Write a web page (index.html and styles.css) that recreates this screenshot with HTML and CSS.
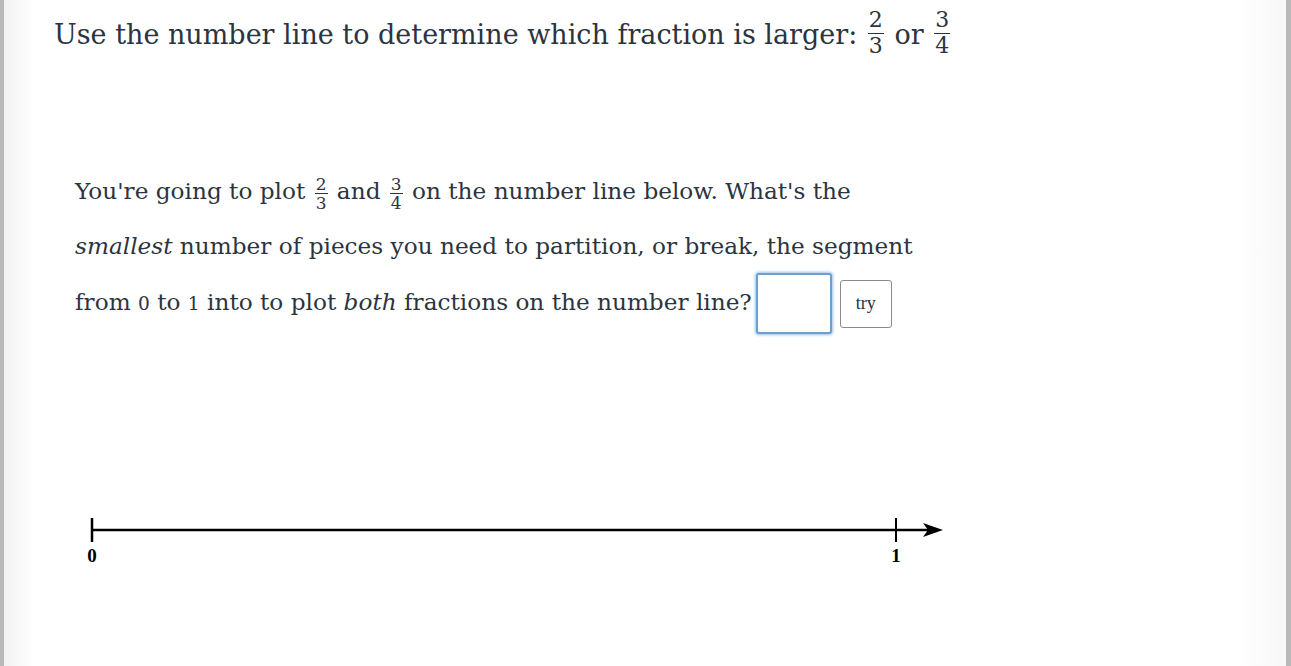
FILE: index.html
```html
<!DOCTYPE html>
<html>
<head>
<meta charset="utf-8">
<link rel="stylesheet" href="styles.css">
</head>
<body>
<div class="page">
  <h1 class="title">Use the number line to determine which fraction is larger: <span class="frac big"><span class="num">2</span><span class="den">3</span></span> or <span class="frac big"><span class="num">3</span><span class="den">4</span></span></h1>
  <p class="question">You're going to plot <span class="frac"><span class="num">2</span><span class="den">3</span></span> and <span class="frac"><span class="num">3</span><span class="den">4</span></span> on the number line below. What's the<br><em>smallest</em> number of pieces you need to partition, or break, the segment<br>from <span class="os">0</span> to <span class="os">1</span> into to plot <em>both</em> fractions on the number line?<span class="answer"><input class="box" type="text"><button class="try">try</button></span></p>
  <div class="numline">
    <svg width="880" height="60" viewBox="0 0 880 60">
      <line x1="17" y1="19" x2="860" y2="19" stroke="#000" stroke-width="2.5"/>
      <line x1="17" y1="7" x2="17" y2="31" stroke="#000" stroke-width="2.5"/>
      <line x1="821" y1="7" x2="821" y2="31" stroke="#000" stroke-width="2"/>
      <path d="M848 12 L868 19 L848 26 L853 19 Z" fill="#000"/>
      <text x="17" y="51" text-anchor="middle" class="lbl">0</text>
      <text x="821" y="51" text-anchor="middle" class="lbl">1</text>
    </svg>
  </div>
</div>
</body>
</html>
```
FILE: styles.css
```css
html, body {
  margin: 0;
  padding: 0;
  height: 100%;
  background: #fff;
}
.page {
  box-sizing: border-box;
  height: 666px;
  border-left: 4px solid #b9b9b9;
  border-right: 5px solid #b9b9b9;
  background: linear-gradient(to right, #f2f2f2 0px, #fff 30px, #fff calc(100% - 50px), #f7f7f7 100%);
  padding: 0 0 0 50px;
  font-family: "DejaVu Serif", "Liberation Serif", serif;
  color: #2b3440;
  overflow: hidden;
}
.title {
  margin: 0;
  padding-top: 9px;
  font-weight: normal;
  font-size: 27px;
  line-height: 52px;
}
.frac {
  display: inline-flex;
  flex-direction: column;
  align-items: center;
  vertical-align: middle;
  font-size: 17px;
  line-height: 16px;
  margin: 0 2px;
}
.frac .num {
  border-bottom: 1px solid #2b3440;
  padding: 0 1px 1px;
}
.frac .den {
  padding-top: 1px;
}
.frac.big {
  font-size: 22px;
  line-height: 20px;
  position: relative;
  top: -4px;
}
.frac.big .num { padding-bottom: 3px; }
.frac.big .den { padding-top: 2px; }
.os { font-size: 0.8em; }
.question {
  margin: 102px 0 0 21px;
  font-size: 23.2px;
  line-height: 55px;
}
.question em { font-style: italic; }
.answer {
  display: inline-flex;
  align-items: center;
  vertical-align: middle;
  gap: 8px;
  margin-left: 4px;
}
.box {
  box-sizing: border-box;
  width: 76px;
  height: 61px;
  border: 2px solid #6a9fd2;
  border-radius: 3px;
  box-shadow: 0 0 3px 1px #9cc2e8;
  background: #fff;
  margin: 0;
  padding: 0;
}
.try {
  box-sizing: border-box;
  width: 52px;
  height: 48px;
  border: 1px solid #8a8a8a;
  border-radius: 3px;
  background: #fff;
  font-family: "Liberation Serif", serif;
  font-size: 18px;
  color: #2b3440;
  padding: 0;
}
.numline {
  margin: 177px 0 0 21px;
}
.lbl {
  font-family: "Liberation Serif", serif;
  font-size: 19px;
  font-weight: bold;
  fill: #000;
}
```
